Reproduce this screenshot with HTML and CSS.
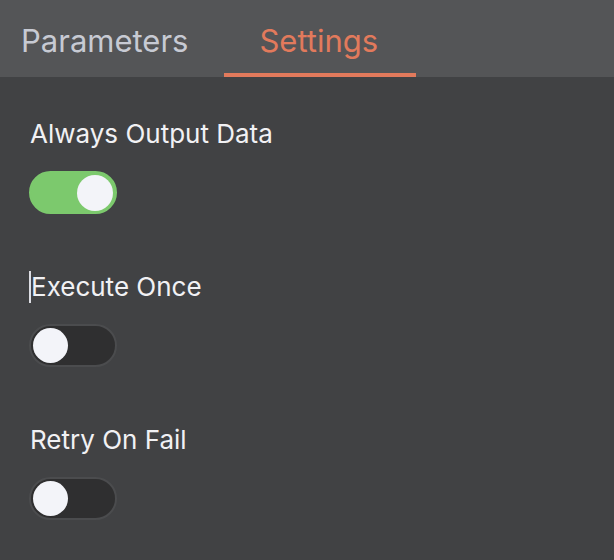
FILE: index.html
```html
<!DOCTYPE html>
<html>
<head>
<meta charset="utf-8">
<link rel="stylesheet" href="styles.css">
</head>
<body>
<div class="tabs">
  <div class="tab tab-params">Parameters</div>
  <div class="tab tab-active">Settings</div>
</div>
<div class="content">
  <div class="setting">
    <div class="label">Always Output Data</div>
    <div class="toggle toggle-on"><span class="knob"></span></div>
  </div>
  <div class="setting">
    <div class="label"><span class="caret"></span>Execute Once</div>
    <div class="toggle"><span class="knob"></span></div>
  </div>
  <div class="setting">
    <div class="label">Retry On Fail</div>
    <div class="toggle"><span class="knob"></span></div>
  </div>
</div>
</body>
</html>
```
FILE: styles.css
```css
html, body {
  margin: 0;
  padding: 0;
  background: #414244;
  height: 100%;
}
body {
  font-family: Inter, "Noto Sans", sans-serif;
  -webkit-font-smoothing: antialiased;
}
.tabs {
  height: 77px;
  background: #545557;
  display: flex;
  align-items: stretch;
  box-sizing: border-box;
}
.tab {
  font-size: 31px;
  line-height: 34px;
  padding-top: 24px;
  box-sizing: border-box;
  height: 77px;
}
.tab-params {
  color: #c7cad3;
  padding-left: 21px;
  margin-right: 36px;
}
.tab-active {
  color: #e27a5c;
  padding-left: 35px;
  padding-right: 38px;
  border-bottom: 4px solid #e27a5c;
}
.content {
  padding: 41px 0 0 30px;
}
.setting {
  display: flex;
  flex-direction: column;
  align-items: flex-start;
  gap: 21px;
  margin-bottom: 57px;
}
.label {
  font-size: 26px;
  line-height: 32px;
  color: #f1f1f4;
  display: flex;
  align-items: center;
}
.caret {
  display: inline-block;
  width: 2px;
  height: 32px;
  background: #dcdde3;
  margin-left: -1px;
  margin-right: 0;
}
.toggle {
  width: 88px;
  height: 43px;
  box-sizing: border-box;
  border-radius: 22px;
  background: #2f2f30;
  border: 2px solid #4b4c4e;
  display: flex;
  align-items: center;
  padding: 0 2px;
  margin-left: -1px;
}
.toggle-on {
  background: #7cc96d;
  border-color: #7cc96d;
  justify-content: flex-end;
}
.knob {
  width: 35px;
  height: 35px;
  border-radius: 50%;
  background: #f3f4f9;
}
.toggle-on .knob {
  width: 36px;
  height: 36px;
}
```
